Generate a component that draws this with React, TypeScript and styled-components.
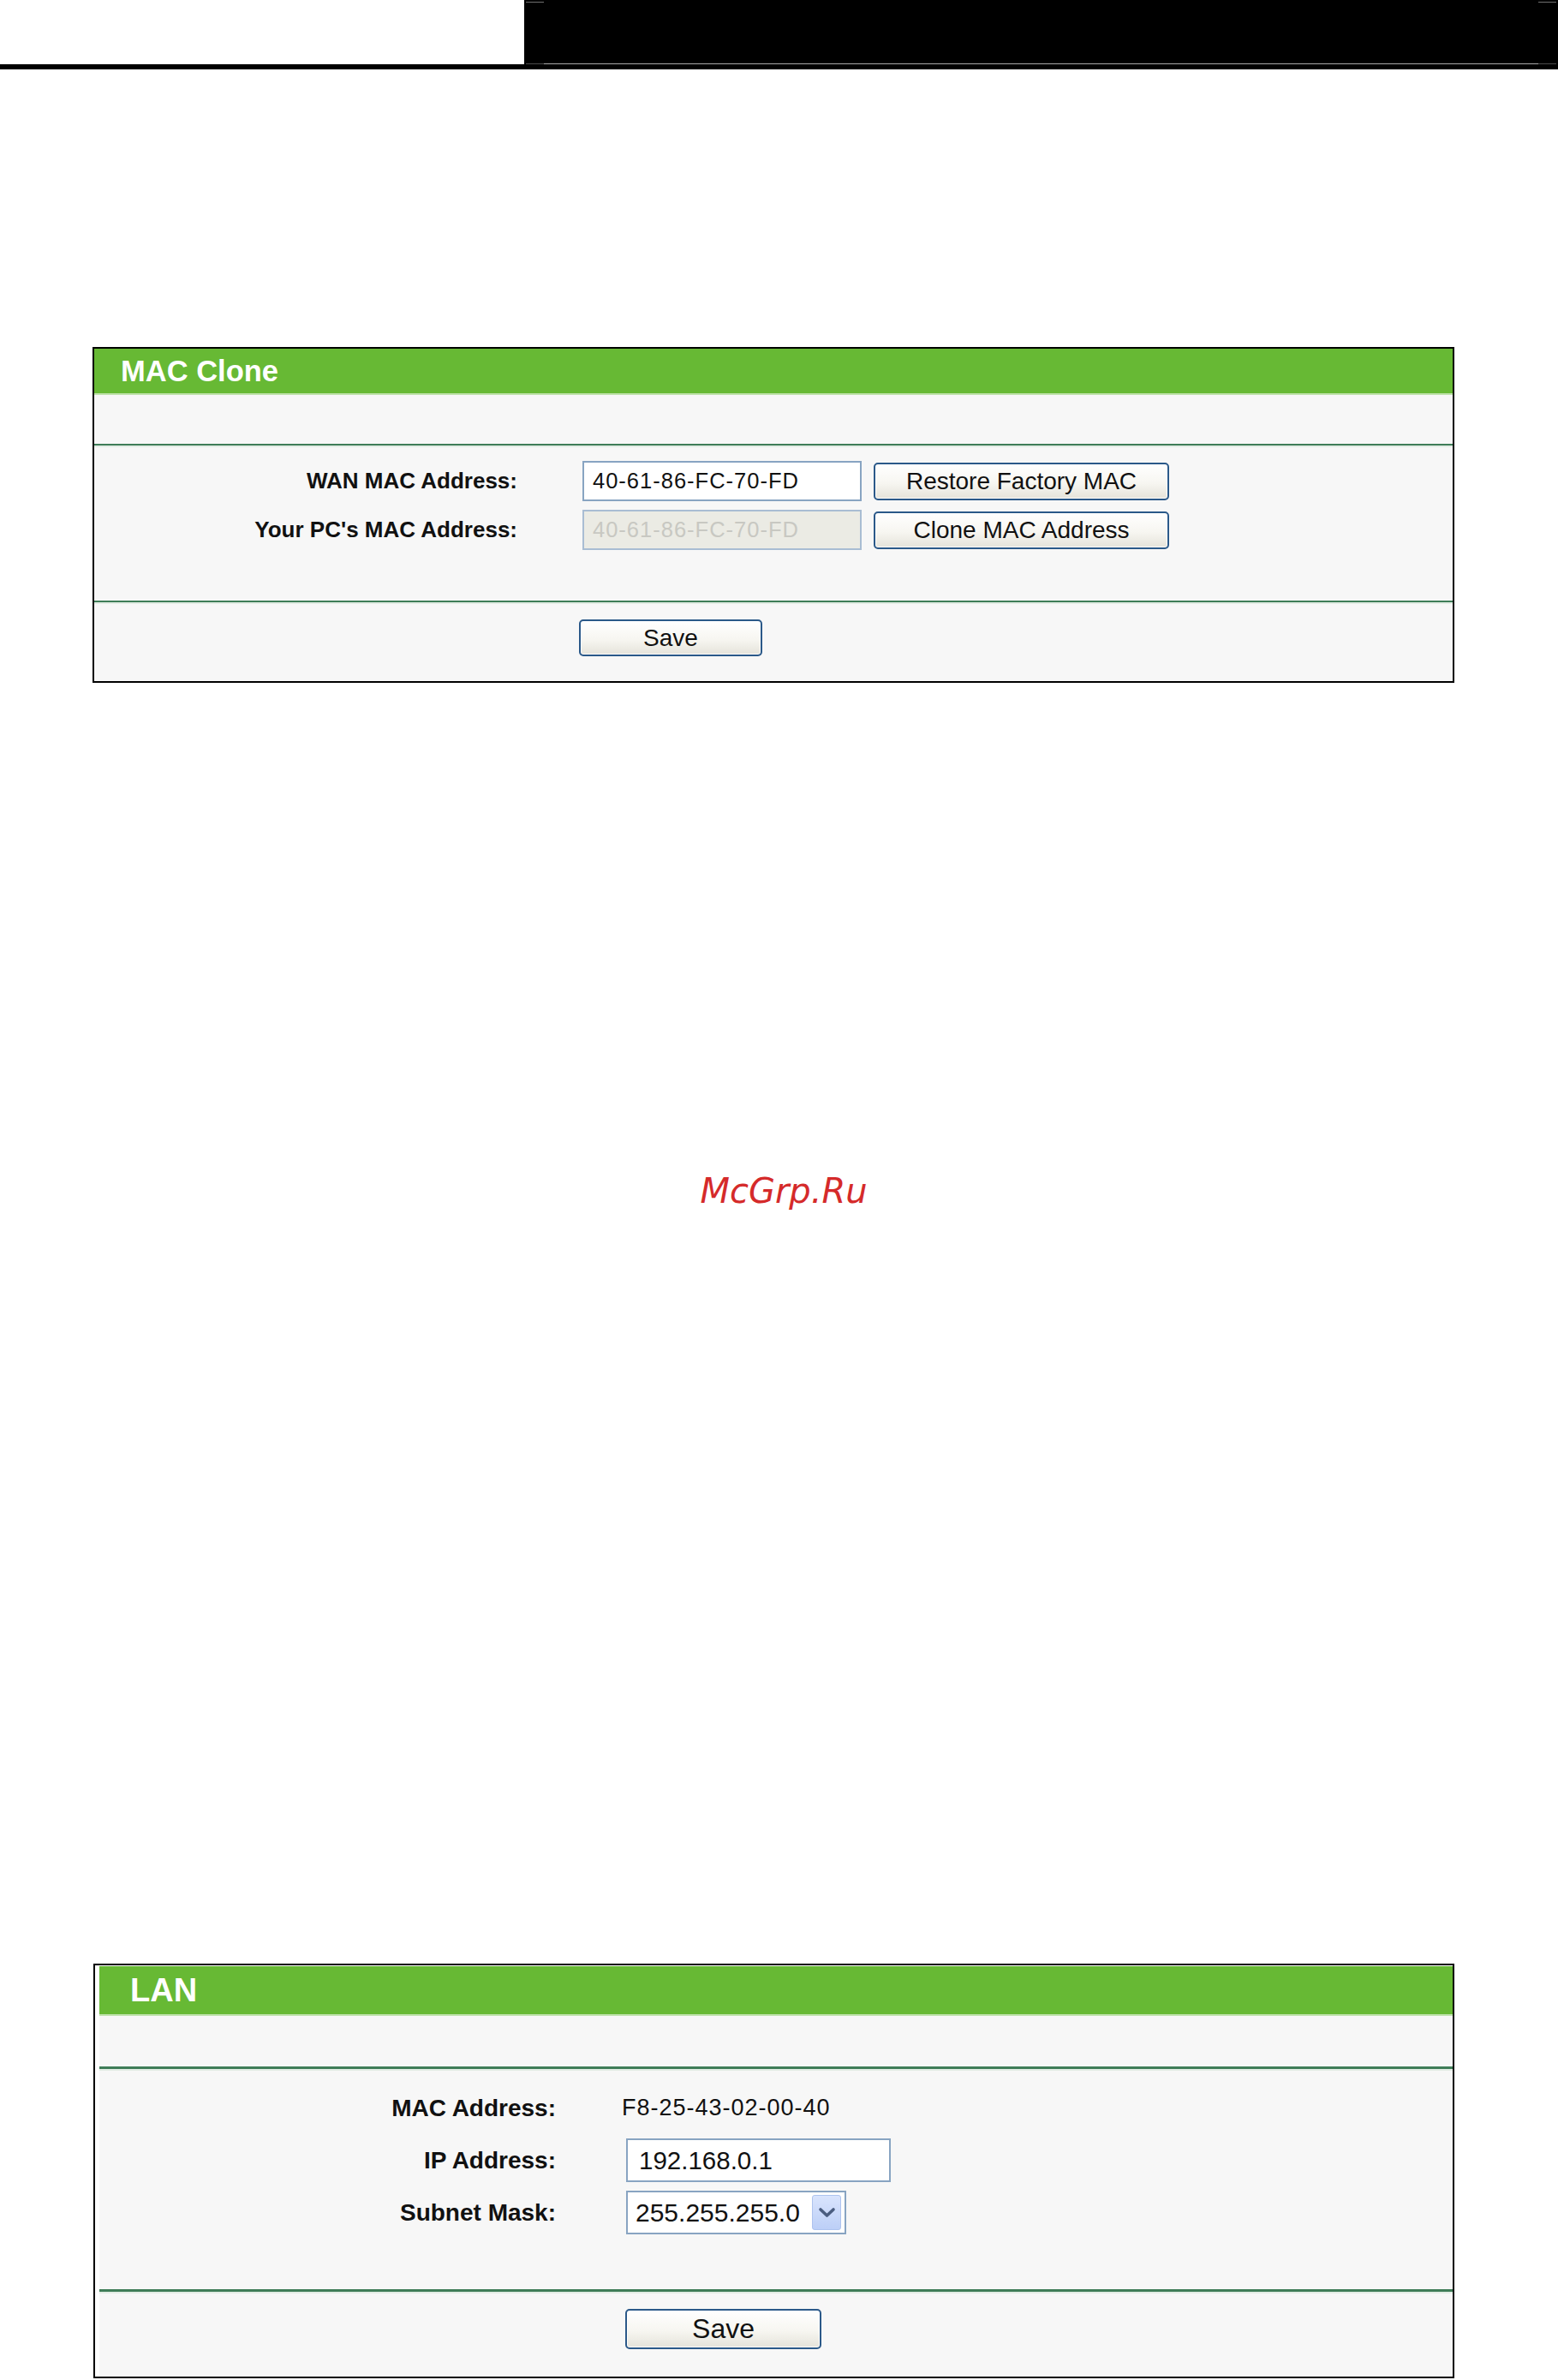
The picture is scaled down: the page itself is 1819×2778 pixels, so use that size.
import React from "react";
import styled, { createGlobalStyle } from "styled-components";

const GlobalStyle = createGlobalStyle`
  html, body {
    margin: 0;
    padding: 0;
    background: #ffffff;
  }
  body {
    font-family: "Liberation Sans", Arial, sans-serif;
    color: #000000;
  }
`;

const FONT = `"Liberation Sans", Arial, sans-serif`;
const PANEL_GREEN = "#67b934";
const PANEL_GRAY = "#f7f7f7";

/* ---------- page header strip ---------- */

const Page = styled.div`
  width: 1819px;
  display: flex;
  flex-direction: column;
`;

const TopBar = styled.header`
  display: flex;
  height: 75px;
  border-bottom: 6px solid #000;
`;

const TopBlank = styled.div`
  width: 612px;
`;

const TopBlack = styled.div`
  flex: 1;
  background: #000;
  display: flex;
  flex-direction: column;
  justify-content: space-between;
  padding: 2px 2px 0 2px;
`;

const MarkRow = styled.div`
  display: flex;
  justify-content: space-between;
`;

const Mark = styled.span`
  width: 21px;
  height: 1px;
  background: #707070;
`;

const EdgeRule = styled.div`
  height: 1px;
  background: linear-gradient(
    to right,
    #4a4a4a 0 21px,
    #a9a9a9 21px calc(100% - 21px),
    #4a4a4a calc(100% - 21px)
  );
`;

/* ---------- settings panel ---------- */

const Panel = styled.section<{
  $left: number;
  $top: number;
  $width: number;
  $inset: number;
  $gap: number;
}>`
  box-sizing: border-box;
  width: ${(p) => p.$width}px;
  margin: ${(p) => p.$top}px 0 0 ${(p) => p.$left}px;
  border: 2px solid #000;
  padding: ${(p) => p.$gap}px 0 0 ${(p) => p.$inset}px;
  background: #ffffff;
`;

const TitleBar = styled.div<{ $h: number; $pad: number; $size: number }>`
  box-sizing: content-box;
  height: ${(p) => p.$h}px;
  display: flex;
  align-items: center;
  padding-left: ${(p) => p.$pad}px;
  background: ${PANEL_GREEN};
  border-bottom: 2px solid #bfe2ab;
  color: #ffffff;
  font-family: ${FONT};
  font-weight: 700;
  font-size: ${(p) => p.$size}px;
`;

const Band = styled.div<{ $h: number }>`
  height: ${(p) => p.$h}px;
  background: ${PANEL_GRAY};
`;

const Divider = styled.div<{ $w: number }>`
  height: 0;
  border-top: ${(p) => p.$w}px solid #3f7d58;
  border-bottom: 2px solid #e2ece4;
`;

const Form = styled.div<{
  $label: number;
  $gap: number;
  $pt: number;
  $pb: number;
}>`
  display: grid;
  grid-template-columns: ${(p) => p.$label}px 1fr;
  column-gap: ${(p) => p.$gap}px;
  row-gap: 10px;
  align-items: center;
  justify-items: start;
  padding: ${(p) => p.$pt}px 0 ${(p) => p.$pb}px;
  background: ${PANEL_GRAY};
`;

const Label = styled.span<{ $size: number }>`
  justify-self: end;
  font-family: ${FONT};
  font-weight: 700;
  font-size: ${(p) => p.$size}px;
  color: #111;
  white-space: nowrap;
`;

const ReadValue = styled.span<{ $h: number; $size: number }>`
  display: flex;
  align-items: center;
  height: ${(p) => p.$h}px;
  font-family: ${FONT};
  font-size: ${(p) => p.$size}px;
  letter-spacing: 1px;
  color: #111;
`;

const FieldCell = styled.div`
  display: flex;
  align-items: center;
  gap: 14px;
`;

const TextField = styled.input<{
  $w: number;
  $h: number;
  $size: number;
  $pl: number;
  $spacing?: number;
  $shift?: number;
}>`
  box-sizing: border-box;
  width: ${(p) => p.$w}px;
  height: ${(p) => p.$h}px;
  margin: 0 0 0 ${(p) => p.$shift ?? 0}px;
  padding: 0 0 0 ${(p) => p.$pl}px;
  border: 2px solid #88a4c2;
  background: #ffffff;
  color: #111;
  font-family: ${FONT};
  font-size: ${(p) => p.$size}px;
  letter-spacing: ${(p) => p.$spacing ?? 0}px;
  outline: none;

  &:disabled {
    background: #ebebe4;
    color: #c8c8c2;
    border-color: #a9bdd3;
  }
`;

const SelectFrame = styled.div<{ $w: number; $h: number; $shift: number }>`
  box-sizing: border-box;
  width: ${(p) => p.$w}px;
  height: ${(p) => p.$h}px;
  margin-left: ${(p) => p.$shift}px;
  display: flex;
  align-items: stretch;
  padding: 3px 4px 3px 0;
  border: 2px solid #88a4c2;
  background: #ffffff;
`;

const SelectControl = styled.select<{ $size: number }>`
  flex: 1;
  min-width: 0;
  appearance: none;
  -webkit-appearance: none;
  border: none;
  background: transparent;
  padding: 0 0 0 9px;
  margin: 0;
  font-family: ${FONT};
  font-size: ${(p) => p.$size}px;
  color: #111;
  outline: none;
`;

const DropButton = styled.span`
  box-sizing: border-box;
  width: 34px;
  display: flex;
  align-items: center;
  justify-content: center;
  border: 1px solid #aec3ee;
  border-radius: 3px;
  background: linear-gradient(#d9e4fd, #bccff7);
`;

const PushButton = styled.button<{ $w: number; $h: number; $size: number }>`
  box-sizing: border-box;
  width: ${(p) => p.$w}px;
  height: ${(p) => p.$h}px;
  padding: 0;
  border: 2px solid #2b5989;
  border-radius: 5px;
  background: linear-gradient(#ffffff 0%, #f7f6f1 55%, #e5e3da 100%);
  box-shadow: inset 0 0 0 1px rgba(255, 255, 255, 0.85);
  font-family: ${FONT};
  font-size: ${(p) => p.$size}px;
  color: #111;
  cursor: pointer;
`;

const Footer = styled.div<{ $pl: number; $pt: number; $pb: number }>`
  display: flex;
  align-items: center;
  padding: ${(p) => p.$pt}px 0 ${(p) => p.$pb}px ${(p) => p.$pl}px;
  background: ${PANEL_GRAY};
`;

const Watermark = styled.div`
  margin: 573px 0 0 0;
  padding-left: 11px;
  text-align: center;
  font-family: "DejaVu Sans", Verdana, sans-serif;
  font-style: italic;
  font-size: 40px;
  line-height: 40px;
  color: #d52a2a;
`;

const Chevron = () => (
  <svg width="21" height="13" viewBox="0 0 21 13" aria-hidden="true">
    <path
      d="M3 3 L10.5 10 L18 3"
      fill="none"
      stroke="#4a5d80"
      strokeWidth="3.6"
      strokeLinecap="round"
      strokeLinejoin="round"
    />
  </svg>
);

export default function App() {
  return (
    <Page>
      <GlobalStyle />

      <TopBar>
        <TopBlank />
        <TopBlack>
          <MarkRow>
            <Mark />
            <Mark />
          </MarkRow>
          <EdgeRule />
        </TopBlack>
      </TopBar>

      {/* MAC Clone */}
      <Panel $left={108} $top={324} $width={1590} $inset={0} $gap={0}>
        <TitleBar $h={52} $pad={31} $size={34.5}>
          MAC Clone
        </TitleBar>
        <Band $h={57} />
        <Divider $w={2} />
        <Form $label={494} $gap={76} $pt={16} $pb={59}>
          <Label $size={26}>WAN MAC Address:</Label>
          <FieldCell>
            <TextField
              $w={326}
              $h={47}
              $size={25.5}
              $pl={10}
              $spacing={1}
              defaultValue="40-61-86-FC-70-FD"
            />
            <PushButton $w={345} $h={44} $size={28}>
              Restore Factory MAC
            </PushButton>
          </FieldCell>

          <Label $size={26}>Your PC's MAC Address:</Label>
          <FieldCell>
            <TextField
              $w={326}
              $h={47}
              $size={25.5}
              $pl={10}
              $spacing={1}
              defaultValue="40-61-86-FC-70-FD"
              disabled
            />
            <PushButton $w={345} $h={44} $size={28}>
              Clone MAC Address
            </PushButton>
          </FieldCell>
        </Form>
        <Divider $w={2} />
        <Footer $pl={566} $pt={18} $pb={29}>
          <PushButton $w={214} $h={43} $size={28}>
            Save
          </PushButton>
        </Footer>
      </Panel>

      <Watermark>McGrp.Ru</Watermark>

      {/* LAN */}
      <Panel $left={109} $top={882} $width={1589} $inset={5} $gap={1}>
        <TitleBar $h={56} $pad={36} $size={38}>
          LAN
        </TitleBar>
        <Band $h={59} />
        <Divider $w={3} />
        <Form $label={533} $gap={77} $pt={18} $pb={64}>
          <Label $size={28}>MAC Address:</Label>
          <ReadValue $h={51} $size={27}>
            F8-25-43-02-00-40
          </ReadValue>

          <Label $size={28}>IP Address:</Label>
          <TextField
            $w={309}
            $h={51}
            $size={29.5}
            $pl={13}
            $shift={5}
            defaultValue="192.168.0.1"
          />

          <Label $size={28}>Subnet Mask:</Label>
          <SelectFrame $w={257} $h={51} $shift={5}>
            <SelectControl $size={30} defaultValue="255.255.255.0">
              <option value="255.255.255.0">255.255.255.0</option>
              <option value="255.255.0.0">255.255.0.0</option>
              <option value="255.0.0.0">255.0.0.0</option>
            </SelectControl>
            <DropButton>
              <Chevron />
            </DropButton>
          </SelectFrame>
        </Form>
        <Divider $w={3} />
        <Footer $pl={614} $pt={18} $pb={32}>
          <PushButton $w={229} $h={47} $size={32}>
            Save
          </PushButton>
        </Footer>
      </Panel>
    </Page>
  );
}
